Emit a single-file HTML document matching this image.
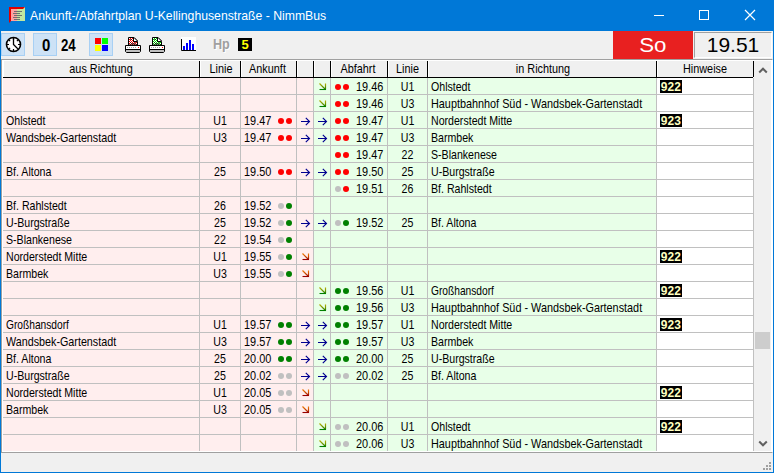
<!DOCTYPE html>
<html lang="de"><head><meta charset="utf-8"><title>Ankunft-/Abfahrtplan U-Kellinghusenstraße - NimmBus</title>
<style>
html,body{margin:0;padding:0}
body{width:774px;height:473px;overflow:hidden;background:#f0f0f0;position:relative;font-family:"Liberation Sans",sans-serif;color:#000}
#win{position:absolute;left:0;top:0;width:774px;height:473px;box-sizing:border-box;border:1px solid #0078d7;border-top:none;background:#f0f0f0}
#title{position:absolute;left:0;top:0;width:774px;height:31px;background:#0078d7}
#title .cap{position:absolute;left:30px;top:8px;font-size:13px;color:#fff;white-space:nowrap;transform:scaleX(.94);transform-origin:0 0}
.t{position:absolute;font-size:13px;line-height:17px;height:17px;white-space:nowrap}
.tl{transform:scaleX(0.815);transform-origin:0 0}
.tc{text-align:center;transform:scaleX(0.815);transform-origin:50% 0}
.n.tl{transform:scaleX(.84)}
.bg{position:absolute}
.hl{position:absolute;left:3px;width:750px;height:1px;background:#c0c0c0}
.vl{position:absolute;top:78px;height:373px;width:1px;background:#c0c0c0}
.dot{position:absolute;width:6px;height:6px;border-radius:50%}
.ar{position:absolute;overflow:visible}
.hd{position:absolute;top:61px;height:16px;background:#f0f0f0;border-left:1px solid #fff;border-right:1px solid #000;box-sizing:border-box;overflow:hidden}
.hw{position:absolute;background:#000;color:#ffffc0;font-size:13px;line-height:13px;height:13px;width:22px;text-align:center}
.hw b{display:inline-block;transform:scaleX(.92);transform-origin:50% 50%;font-weight:bold}

.tb{position:absolute;box-sizing:border-box;background:#cde2f6;border:1px solid #a8d0f4}
.dig{position:absolute;font-size:17px;line-height:17px;font-weight:bold;transform:scaleX(.8);transform-origin:0 0;letter-spacing:0}
.sq{position:absolute;width:6px;height:6px}
.hp{position:absolute;font-size:14px;line-height:17px;font-weight:bold;transform:scaleX(.9);transform-origin:0 0}
.five{position:absolute;width:14px;height:13px;background:#000;color:#ffff00;font-weight:bold;font-size:13px;line-height:13px;text-align:center}
.so{position:absolute;background:#e82020;color:#fff;font-size:21px;line-height:27px;text-align:center}
.so b{display:inline-block;font-weight:normal;transform:scaleX(1.06)}
.clk{position:absolute;box-sizing:border-box;border:1px solid #a0a0a0;border-right-color:#fff;border-bottom-color:#fff;font-size:21px;line-height:23px;text-align:center;background:#f0f0f0}
.gp{position:absolute;width:2px;height:2px;background:#a0a0a0}

</style></head><body>
<div id="win"></div>
<div id="title"><span class="cap">Ankunft-/Abfahrtplan U-Kellinghusenstraße - NimmBus</span></div>

<svg style="position:absolute;left:9px;top:7px" width="16" height="16" viewBox="0 0 16 16">
<rect x="0" y="0" width="8" height="14" fill="#ffa0a0"/><rect x="8" y="0" width="8" height="14" fill="#c0e8a0"/>
<path d="M0 16V0h16l-2 2H2v12z" fill="#e00000"/>
<g stroke="#707070" stroke-width="1"><path d="M5 4.500h8M4 6.500h7M5 8.500h8M4 10.500h7M5 12.500h6"/></g></svg>
<svg style="position:absolute;left:640px;top:0" width="134" height="31" viewBox="0 0 134 31">
<g stroke="#fff" stroke-width="1" fill="none"><path d="M14 15.500h10"/><rect x="59.500" y="10.500" width="9" height="9"/><path d="M105 10l10 10M115 10l-10 10" stroke-width="1.200"/></g></svg>


<!-- toolbar -->
<div class="tb" style="left:1px;top:33px;width:24px;height:23px"></div>
<svg style="position:absolute;left:5px;top:36px" width="17" height="17" viewBox="0 0 17 17">
<circle cx="8.5" cy="8.5" r="7" fill="#fff" stroke="#000" stroke-width="1.6"/>
<g stroke="#000" stroke-width="1.2"><path d="M8.500 1.500v2.500M8.500 13v2.500M1.500 8.500h2.500M13 8.500h2.500M3.600 3.600l1.500 1.500M13.400 3.600l-1.500 1.500M3.600 13.400l1.500-1.500M13.400 13.400l-1.500-1.500"/></g>
<path d="M8.500 2v6.500l3.500 3.500" fill="none" stroke="#000" stroke-width="1.300"/></svg>
<div class="tb" style="left:33px;top:33px;width:24px;height:23px"></div>
<span class="dig" style="left:42px;top:37px;transform:scaleX(.88)">0</span>
<span class="dig" style="left:61.300px;top:37px;transform:scaleX(.78)">24</span>
<div class="tb" style="left:89px;top:33px;width:24px;height:23px"></div>
<i class="sq" style="left:95px;top:38px;background:#ff0000"></i><i class="sq" style="left:102px;top:38px;background:#00ff00"></i>
<i class="sq" style="left:95px;top:45px;background:#ffff00"></i><i class="sq" style="left:102px;top:45px;background:#0000ff"></i>
<svg style="position:absolute;left:125px;top:37px" width="16" height="16" viewBox="0 0 16 16">
<defs><pattern id="pr" width="2" height="2" patternUnits="userSpaceOnUse"><rect width="2" height="2" fill="#fff"/><rect width="1" height="1" fill="#f00"/><rect x="1" y="1" width="1" height="1" fill="#f00"/></pattern></defs>
<path d="M3.500 8V.500h5.500l3.500 3.500V8z" fill="url(#pr)" stroke="#000"/><path d="M9 .500v4h4z" fill="#fff"/><path d="M9 .500l3.500 3.500M8.500 1v3.500h4" fill="none" stroke="#000" stroke-width="1"/>
<path d="M5 2.500h2M5 5.500h1M6 6.500h4M10 5.500h1" stroke="#000" stroke-width="1" opacity=".55"/>
<path d="M.500 8.500h15v6l-1 1h-13l-1-1z" fill="#fff" stroke="#000"/><rect x="1" y="12" width="14" height="1" fill="#000"/><rect x="1" y="13" width="14" height="2" fill="#c0c0c0"/>
<path d="M2 10.500h10" stroke="#a0a0a0" stroke-dasharray="1 1"/><rect x="13" y="10" width="1" height="1" fill="#f00"/></svg>
<svg style="position:absolute;left:149px;top:37px" width="16" height="16" viewBox="0 0 16 16">
<defs><pattern id="pg" width="2" height="2" patternUnits="userSpaceOnUse"><rect width="2" height="2" fill="#fff"/><rect width="1" height="1" fill="#00e000"/><rect x="1" y="1" width="1" height="1" fill="#00e000"/></pattern></defs>
<path d="M3.500 8V.500h5.500l3.500 3.500V8z" fill="url(#pg)" stroke="#000"/><path d="M9 .500v4h4z" fill="#fff"/><path d="M9 .500l3.500 3.500M8.500 1v3.500h4" fill="none" stroke="#000" stroke-width="1"/>
<path d="M5 2.500h2M5 5.500h1M6 6.500h4M10 5.500h1" stroke="#000" stroke-width="1" opacity=".55"/>
<path d="M.500 8.500h15v6l-1 1h-13l-1-1z" fill="#fff" stroke="#000"/><rect x="1" y="12" width="14" height="1" fill="#000"/><rect x="1" y="13" width="14" height="2" fill="#c0c0c0"/>
<path d="M2 10.500h10" stroke="#a0a0a0" stroke-dasharray="1 1"/><rect x="13" y="10" width="1" height="1" fill="#f00"/></svg>
<svg style="position:absolute;left:181px;top:37px" width="15" height="14" viewBox="0 0 15 14">
<rect width="15" height="14" fill="#fff"/><path d="M.5 2v11.500H15" fill="none" stroke="#000"/>
<g fill="#0000ff"><rect x="2" y="9" width="2" height="4"/><rect x="5" y="6" width="2" height="7"/><rect x="8" y="3" width="2" height="10"/><rect x="11" y="7" width="2" height="6"/></g></svg>
<span class="hp" style="left:213.500px;top:36.500px;color:#fff">Hp</span><span class="hp" style="left:212.500px;top:35.500px;color:#a0a0a0">Hp</span>
<span class="five" style="left:238px;top:38px">5</span>
<div class="so" style="left:613px;top:31px;width:80px;height:28px"><b>So</b></div>
<div class="clk" style="left:694px;top:32px;width:78px;height:26px">19.51</div>

<div id="grid">
<!-- sunken frame -->
<div style="position:absolute;left:1px;top:59px;width:772px;height:394px;box-sizing:border-box;border:1px solid #a0a0a0;border-right-color:#fff;background:#fff"></div>
<div style="position:absolute;left:3px;top:77px;width:750px;height:1px;background:#000"></div>
<div class="bg" style="left:3px;top:78px;width:311px;height:373px;background:#ffeeee"></div>
<div class="bg" style="left:314px;top:78px;width:343px;height:373px;background:#e8ffe8"></div>
<div class="bg" style="left:657px;top:78px;width:96px;height:373px;background:#ffffff"></div>
<div class="hl" style="top:94px"></div>
<div class="hl" style="top:111px"></div>
<div class="hl" style="top:128px"></div>
<div class="hl" style="top:145px"></div>
<div class="hl" style="top:162px"></div>
<div class="hl" style="top:179px"></div>
<div class="hl" style="top:196px"></div>
<div class="hl" style="top:213px"></div>
<div class="hl" style="top:230px"></div>
<div class="hl" style="top:247px"></div>
<div class="hl" style="top:264px"></div>
<div class="hl" style="top:281px"></div>
<div class="hl" style="top:298px"></div>
<div class="hl" style="top:315px"></div>
<div class="hl" style="top:332px"></div>
<div class="hl" style="top:349px"></div>
<div class="hl" style="top:366px"></div>
<div class="hl" style="top:383px"></div>
<div class="hl" style="top:400px"></div>
<div class="hl" style="top:417px"></div>
<div class="hl" style="top:434px"></div>
<div class="vl" style="left:199px"></div>
<div class="vl" style="left:240px"></div>
<div class="vl" style="left:296px"></div>
<div class="vl" style="left:313px"></div>
<div class="vl" style="left:330px"></div>
<div class="vl" style="left:387px"></div>
<div class="vl" style="left:427px"></div>
<div class="vl" style="left:656px"></div>
<div class="vl" style="left:753px"></div>
<svg class="ar" style="left:319px;top:83px" width="7" height="7" viewBox="0 0 7 7"><defs><linearGradient id="gdg" gradientUnits="userSpaceOnUse" x1="0" y1="0" x2="0" y2="7"><stop offset="0.2" stop-color="#a8a800"/><stop offset="0.9" stop-color="#208000"/></linearGradient></defs><path d="M.500 .500L6.500 6.500M6.500 .500V6.500" fill="none" stroke="url(#gdg)" stroke-width="1.200"/><path d="M.500 6.500H7" stroke="#008000" stroke-width="1.100"/></svg>
<i class="dot" style="left:335px;top:84px;background:#ff0000"></i><i class="dot" style="left:343px;top:84px;background:#ff0000"></i>
<span class="t n tl" style="left:356px;top:78px">19.46</span>
<span class="t tc" style="left:388px;top:78px;width:39px">U1</span>
<span class="t tl" style="left:431px;top:78px">Ohlstedt</span>
<span class="hw" style="left:660px;top:80px"><b>922</b></span>
<svg class="ar" style="left:319px;top:100px" width="7" height="7" viewBox="0 0 7 7"><defs><linearGradient id="gdg" gradientUnits="userSpaceOnUse" x1="0" y1="0" x2="0" y2="7"><stop offset="0.2" stop-color="#a8a800"/><stop offset="0.9" stop-color="#208000"/></linearGradient></defs><path d="M.500 .500L6.500 6.500M6.500 .500V6.500" fill="none" stroke="url(#gdg)" stroke-width="1.200"/><path d="M.500 6.500H7" stroke="#008000" stroke-width="1.100"/></svg>
<i class="dot" style="left:335px;top:101px;background:#ff0000"></i><i class="dot" style="left:343px;top:101px;background:#ff0000"></i>
<span class="t n tl" style="left:356px;top:95px">19.46</span>
<span class="t tc" style="left:388px;top:95px;width:39px">U3</span>
<span class="t tl" style="left:431px;top:95px;transform:scaleX(0.834)">Hauptbahnhof Süd - Wandsbek-Gartenstadt</span>
<span class="t tl" style="left:6px;top:112px">Ohlstedt</span>
<span class="t tc" style="left:200px;top:112px;width:40px">U1</span>
<span class="t n tl" style="left:244px;top:112px">19.47</span>
<i class="dot" style="left:278px;top:118px;background:#ff0000"></i><i class="dot" style="left:286px;top:118px;background:#ff0000"></i>
<svg class="ar" style="left:300px;top:117px" width="11" height="9" viewBox="0 0 11 9"><path d="M1 4.500H9.500M5.800 .800l3.700 3.700l-3.700 3.700" fill="none" stroke="#000090" stroke-width="1.150"/></svg>
<svg class="ar" style="left:317px;top:117px" width="11" height="9" viewBox="0 0 11 9"><path d="M1 4.500H9.500M5.800 .800l3.700 3.700l-3.700 3.700" fill="none" stroke="#000090" stroke-width="1.150"/></svg>
<i class="dot" style="left:335px;top:118px;background:#ff0000"></i><i class="dot" style="left:343px;top:118px;background:#ff0000"></i>
<span class="t n tl" style="left:356px;top:112px">19.47</span>
<span class="t tc" style="left:388px;top:112px;width:39px">U1</span>
<span class="t tl" style="left:431px;top:112px">Norderstedt Mitte</span>
<span class="hw" style="left:660px;top:114px"><b>923</b></span>
<span class="t tl" style="left:6px;top:129px;transform:scaleX(0.827)">Wandsbek-Gartenstadt</span>
<span class="t tc" style="left:200px;top:129px;width:40px">U3</span>
<span class="t n tl" style="left:244px;top:129px">19.47</span>
<i class="dot" style="left:278px;top:135px;background:#ff0000"></i><i class="dot" style="left:286px;top:135px;background:#ff0000"></i>
<svg class="ar" style="left:300px;top:134px" width="11" height="9" viewBox="0 0 11 9"><path d="M1 4.500H9.500M5.800 .800l3.700 3.700l-3.700 3.700" fill="none" stroke="#000090" stroke-width="1.150"/></svg>
<svg class="ar" style="left:317px;top:134px" width="11" height="9" viewBox="0 0 11 9"><path d="M1 4.500H9.500M5.800 .800l3.700 3.700l-3.700 3.700" fill="none" stroke="#000090" stroke-width="1.150"/></svg>
<i class="dot" style="left:335px;top:135px;background:#ff0000"></i><i class="dot" style="left:343px;top:135px;background:#ff0000"></i>
<span class="t n tl" style="left:356px;top:129px">19.47</span>
<span class="t tc" style="left:388px;top:129px;width:39px">U3</span>
<span class="t tl" style="left:431px;top:129px">Barmbek</span>
<i class="dot" style="left:335px;top:152px;background:#ff0000"></i><i class="dot" style="left:343px;top:152px;background:#ff0000"></i>
<span class="t n tl" style="left:356px;top:146px">19.47</span>
<span class="t tc" style="left:388px;top:146px;width:39px">22</span>
<span class="t tl" style="left:431px;top:146px">S-Blankenese</span>
<span class="t tl" style="left:6px;top:163px">Bf. Altona</span>
<span class="t tc" style="left:200px;top:163px;width:40px">25</span>
<span class="t n tl" style="left:244px;top:163px">19.50</span>
<i class="dot" style="left:278px;top:169px;background:#ff0000"></i><i class="dot" style="left:286px;top:169px;background:#ff0000"></i>
<svg class="ar" style="left:300px;top:168px" width="11" height="9" viewBox="0 0 11 9"><path d="M1 4.500H9.500M5.800 .800l3.700 3.700l-3.700 3.700" fill="none" stroke="#000090" stroke-width="1.150"/></svg>
<svg class="ar" style="left:317px;top:168px" width="11" height="9" viewBox="0 0 11 9"><path d="M1 4.500H9.500M5.800 .800l3.700 3.700l-3.700 3.700" fill="none" stroke="#000090" stroke-width="1.150"/></svg>
<i class="dot" style="left:335px;top:169px;background:#ff0000"></i><i class="dot" style="left:343px;top:169px;background:#ff0000"></i>
<span class="t n tl" style="left:356px;top:163px">19.50</span>
<span class="t tc" style="left:388px;top:163px;width:39px">25</span>
<span class="t tl" style="left:431px;top:163px">U-Burgstraße</span>
<i class="dot" style="left:335px;top:186px;background:#c0c0c0"></i><i class="dot" style="left:343px;top:186px;background:#ff0000"></i>
<span class="t n tl" style="left:356px;top:180px">19.51</span>
<span class="t tc" style="left:388px;top:180px;width:39px">26</span>
<span class="t tl" style="left:431px;top:180px">Bf. Rahlstedt</span>
<span class="t tl" style="left:6px;top:197px">Bf. Rahlstedt</span>
<span class="t tc" style="left:200px;top:197px;width:40px">26</span>
<span class="t n tl" style="left:244px;top:197px">19.52</span>
<i class="dot" style="left:278px;top:203px;background:#c0c0c0"></i><i class="dot" style="left:286px;top:203px;background:#008000"></i>
<span class="t tl" style="left:6px;top:214px">U-Burgstraße</span>
<span class="t tc" style="left:200px;top:214px;width:40px">25</span>
<span class="t n tl" style="left:244px;top:214px">19.52</span>
<i class="dot" style="left:278px;top:220px;background:#c0c0c0"></i><i class="dot" style="left:286px;top:220px;background:#008000"></i>
<svg class="ar" style="left:300px;top:219px" width="11" height="9" viewBox="0 0 11 9"><path d="M1 4.500H9.500M5.800 .800l3.700 3.700l-3.700 3.700" fill="none" stroke="#000090" stroke-width="1.150"/></svg>
<svg class="ar" style="left:317px;top:219px" width="11" height="9" viewBox="0 0 11 9"><path d="M1 4.500H9.500M5.800 .800l3.700 3.700l-3.700 3.700" fill="none" stroke="#000090" stroke-width="1.150"/></svg>
<i class="dot" style="left:335px;top:220px;background:#c0c0c0"></i><i class="dot" style="left:343px;top:220px;background:#008000"></i>
<span class="t n tl" style="left:356px;top:214px">19.52</span>
<span class="t tc" style="left:388px;top:214px;width:39px">25</span>
<span class="t tl" style="left:431px;top:214px">Bf. Altona</span>
<span class="t tl" style="left:6px;top:231px">S-Blankenese</span>
<span class="t tc" style="left:200px;top:231px;width:40px">22</span>
<span class="t n tl" style="left:244px;top:231px">19.54</span>
<i class="dot" style="left:278px;top:237px;background:#c0c0c0"></i><i class="dot" style="left:286px;top:237px;background:#008000"></i>
<span class="t tl" style="left:6px;top:248px">Norderstedt Mitte</span>
<span class="t tc" style="left:200px;top:248px;width:40px">U1</span>
<span class="t n tl" style="left:244px;top:248px">19.55</span>
<i class="dot" style="left:278px;top:254px;background:#c0c0c0"></i><i class="dot" style="left:286px;top:254px;background:#008000"></i>
<svg class="ar" style="left:302px;top:253px" width="7" height="7" viewBox="0 0 7 7"><defs><linearGradient id="gdr" gradientUnits="userSpaceOnUse" x1="0" y1="0" x2="0" y2="7"><stop offset="0.2" stop-color="#e87000"/><stop offset="0.9" stop-color="#a01000"/></linearGradient></defs><path d="M.500 .500L6.500 6.500M6.500 .500V6.500" fill="none" stroke="url(#gdr)" stroke-width="1.200"/><path d="M.500 6.500H7" stroke="#980000" stroke-width="1.100"/></svg>
<span class="hw" style="left:660px;top:250px"><b>922</b></span>
<span class="t tl" style="left:6px;top:265px">Barmbek</span>
<span class="t tc" style="left:200px;top:265px;width:40px">U3</span>
<span class="t n tl" style="left:244px;top:265px">19.55</span>
<i class="dot" style="left:278px;top:271px;background:#c0c0c0"></i><i class="dot" style="left:286px;top:271px;background:#008000"></i>
<svg class="ar" style="left:302px;top:270px" width="7" height="7" viewBox="0 0 7 7"><defs><linearGradient id="gdr" gradientUnits="userSpaceOnUse" x1="0" y1="0" x2="0" y2="7"><stop offset="0.2" stop-color="#e87000"/><stop offset="0.9" stop-color="#a01000"/></linearGradient></defs><path d="M.500 .500L6.500 6.500M6.500 .500V6.500" fill="none" stroke="url(#gdr)" stroke-width="1.200"/><path d="M.500 6.500H7" stroke="#980000" stroke-width="1.100"/></svg>
<svg class="ar" style="left:319px;top:287px" width="7" height="7" viewBox="0 0 7 7"><defs><linearGradient id="gdg" gradientUnits="userSpaceOnUse" x1="0" y1="0" x2="0" y2="7"><stop offset="0.2" stop-color="#a8a800"/><stop offset="0.9" stop-color="#208000"/></linearGradient></defs><path d="M.500 .500L6.500 6.500M6.500 .500V6.500" fill="none" stroke="url(#gdg)" stroke-width="1.200"/><path d="M.500 6.500H7" stroke="#008000" stroke-width="1.100"/></svg>
<i class="dot" style="left:335px;top:288px;background:#008000"></i><i class="dot" style="left:343px;top:288px;background:#008000"></i>
<span class="t n tl" style="left:356px;top:282px">19.56</span>
<span class="t tc" style="left:388px;top:282px;width:39px">U1</span>
<span class="t tl" style="left:431px;top:282px;transform:scaleX(0.785)">Großhansdorf</span>
<span class="hw" style="left:660px;top:284px"><b>922</b></span>
<svg class="ar" style="left:319px;top:304px" width="7" height="7" viewBox="0 0 7 7"><defs><linearGradient id="gdg" gradientUnits="userSpaceOnUse" x1="0" y1="0" x2="0" y2="7"><stop offset="0.2" stop-color="#a8a800"/><stop offset="0.9" stop-color="#208000"/></linearGradient></defs><path d="M.500 .500L6.500 6.500M6.500 .500V6.500" fill="none" stroke="url(#gdg)" stroke-width="1.200"/><path d="M.500 6.500H7" stroke="#008000" stroke-width="1.100"/></svg>
<i class="dot" style="left:335px;top:305px;background:#008000"></i><i class="dot" style="left:343px;top:305px;background:#008000"></i>
<span class="t n tl" style="left:356px;top:299px">19.56</span>
<span class="t tc" style="left:388px;top:299px;width:39px">U3</span>
<span class="t tl" style="left:431px;top:299px;transform:scaleX(0.834)">Hauptbahnhof Süd - Wandsbek-Gartenstadt</span>
<span class="t tl" style="left:6px;top:316px;transform:scaleX(0.785)">Großhansdorf</span>
<span class="t tc" style="left:200px;top:316px;width:40px">U1</span>
<span class="t n tl" style="left:244px;top:316px">19.57</span>
<i class="dot" style="left:278px;top:322px;background:#008000"></i><i class="dot" style="left:286px;top:322px;background:#008000"></i>
<svg class="ar" style="left:300px;top:321px" width="11" height="9" viewBox="0 0 11 9"><path d="M1 4.500H9.500M5.800 .800l3.700 3.700l-3.700 3.700" fill="none" stroke="#000090" stroke-width="1.150"/></svg>
<svg class="ar" style="left:317px;top:321px" width="11" height="9" viewBox="0 0 11 9"><path d="M1 4.500H9.500M5.800 .800l3.700 3.700l-3.700 3.700" fill="none" stroke="#000090" stroke-width="1.150"/></svg>
<i class="dot" style="left:335px;top:322px;background:#008000"></i><i class="dot" style="left:343px;top:322px;background:#008000"></i>
<span class="t n tl" style="left:356px;top:316px">19.57</span>
<span class="t tc" style="left:388px;top:316px;width:39px">U1</span>
<span class="t tl" style="left:431px;top:316px">Norderstedt Mitte</span>
<span class="hw" style="left:660px;top:318px"><b>923</b></span>
<span class="t tl" style="left:6px;top:333px;transform:scaleX(0.827)">Wandsbek-Gartenstadt</span>
<span class="t tc" style="left:200px;top:333px;width:40px">U3</span>
<span class="t n tl" style="left:244px;top:333px">19.57</span>
<i class="dot" style="left:278px;top:339px;background:#008000"></i><i class="dot" style="left:286px;top:339px;background:#008000"></i>
<svg class="ar" style="left:300px;top:338px" width="11" height="9" viewBox="0 0 11 9"><path d="M1 4.500H9.500M5.800 .800l3.700 3.700l-3.700 3.700" fill="none" stroke="#000090" stroke-width="1.150"/></svg>
<svg class="ar" style="left:317px;top:338px" width="11" height="9" viewBox="0 0 11 9"><path d="M1 4.500H9.500M5.800 .800l3.700 3.700l-3.700 3.700" fill="none" stroke="#000090" stroke-width="1.150"/></svg>
<i class="dot" style="left:335px;top:339px;background:#008000"></i><i class="dot" style="left:343px;top:339px;background:#008000"></i>
<span class="t n tl" style="left:356px;top:333px">19.57</span>
<span class="t tc" style="left:388px;top:333px;width:39px">U3</span>
<span class="t tl" style="left:431px;top:333px">Barmbek</span>
<span class="t tl" style="left:6px;top:350px">Bf. Altona</span>
<span class="t tc" style="left:200px;top:350px;width:40px">25</span>
<span class="t n tl" style="left:244px;top:350px">20.00</span>
<i class="dot" style="left:278px;top:356px;background:#008000"></i><i class="dot" style="left:286px;top:356px;background:#008000"></i>
<svg class="ar" style="left:300px;top:355px" width="11" height="9" viewBox="0 0 11 9"><path d="M1 4.500H9.500M5.800 .800l3.700 3.700l-3.700 3.700" fill="none" stroke="#000090" stroke-width="1.150"/></svg>
<svg class="ar" style="left:317px;top:355px" width="11" height="9" viewBox="0 0 11 9"><path d="M1 4.500H9.500M5.800 .800l3.700 3.700l-3.700 3.700" fill="none" stroke="#000090" stroke-width="1.150"/></svg>
<i class="dot" style="left:335px;top:356px;background:#008000"></i><i class="dot" style="left:343px;top:356px;background:#008000"></i>
<span class="t n tl" style="left:356px;top:350px">20.00</span>
<span class="t tc" style="left:388px;top:350px;width:39px">25</span>
<span class="t tl" style="left:431px;top:350px">U-Burgstraße</span>
<span class="t tl" style="left:6px;top:367px">U-Burgstraße</span>
<span class="t tc" style="left:200px;top:367px;width:40px">25</span>
<span class="t n tl" style="left:244px;top:367px">20.02</span>
<i class="dot" style="left:278px;top:373px;background:#c0c0c0"></i><i class="dot" style="left:286px;top:373px;background:#c0c0c0"></i>
<svg class="ar" style="left:300px;top:372px" width="11" height="9" viewBox="0 0 11 9"><path d="M1 4.500H9.500M5.800 .800l3.700 3.700l-3.700 3.700" fill="none" stroke="#000090" stroke-width="1.150"/></svg>
<svg class="ar" style="left:317px;top:372px" width="11" height="9" viewBox="0 0 11 9"><path d="M1 4.500H9.500M5.800 .800l3.700 3.700l-3.700 3.700" fill="none" stroke="#000090" stroke-width="1.150"/></svg>
<i class="dot" style="left:335px;top:373px;background:#c0c0c0"></i><i class="dot" style="left:343px;top:373px;background:#c0c0c0"></i>
<span class="t n tl" style="left:356px;top:367px">20.02</span>
<span class="t tc" style="left:388px;top:367px;width:39px">25</span>
<span class="t tl" style="left:431px;top:367px">Bf. Altona</span>
<span class="t tl" style="left:6px;top:384px">Norderstedt Mitte</span>
<span class="t tc" style="left:200px;top:384px;width:40px">U1</span>
<span class="t n tl" style="left:244px;top:384px">20.05</span>
<i class="dot" style="left:278px;top:390px;background:#c0c0c0"></i><i class="dot" style="left:286px;top:390px;background:#c0c0c0"></i>
<svg class="ar" style="left:302px;top:389px" width="7" height="7" viewBox="0 0 7 7"><defs><linearGradient id="gdr" gradientUnits="userSpaceOnUse" x1="0" y1="0" x2="0" y2="7"><stop offset="0.2" stop-color="#e87000"/><stop offset="0.9" stop-color="#a01000"/></linearGradient></defs><path d="M.500 .500L6.500 6.500M6.500 .500V6.500" fill="none" stroke="url(#gdr)" stroke-width="1.200"/><path d="M.500 6.500H7" stroke="#980000" stroke-width="1.100"/></svg>
<span class="hw" style="left:660px;top:386px"><b>922</b></span>
<span class="t tl" style="left:6px;top:401px">Barmbek</span>
<span class="t tc" style="left:200px;top:401px;width:40px">U3</span>
<span class="t n tl" style="left:244px;top:401px">20.05</span>
<i class="dot" style="left:278px;top:407px;background:#c0c0c0"></i><i class="dot" style="left:286px;top:407px;background:#c0c0c0"></i>
<svg class="ar" style="left:302px;top:406px" width="7" height="7" viewBox="0 0 7 7"><defs><linearGradient id="gdr" gradientUnits="userSpaceOnUse" x1="0" y1="0" x2="0" y2="7"><stop offset="0.2" stop-color="#e87000"/><stop offset="0.9" stop-color="#a01000"/></linearGradient></defs><path d="M.500 .500L6.500 6.500M6.500 .500V6.500" fill="none" stroke="url(#gdr)" stroke-width="1.200"/><path d="M.500 6.500H7" stroke="#980000" stroke-width="1.100"/></svg>
<svg class="ar" style="left:319px;top:423px" width="7" height="7" viewBox="0 0 7 7"><defs><linearGradient id="gdg" gradientUnits="userSpaceOnUse" x1="0" y1="0" x2="0" y2="7"><stop offset="0.2" stop-color="#a8a800"/><stop offset="0.9" stop-color="#208000"/></linearGradient></defs><path d="M.500 .500L6.500 6.500M6.500 .500V6.500" fill="none" stroke="url(#gdg)" stroke-width="1.200"/><path d="M.500 6.500H7" stroke="#008000" stroke-width="1.100"/></svg>
<i class="dot" style="left:335px;top:424px;background:#c0c0c0"></i><i class="dot" style="left:343px;top:424px;background:#c0c0c0"></i>
<span class="t n tl" style="left:356px;top:418px">20.06</span>
<span class="t tc" style="left:388px;top:418px;width:39px">U1</span>
<span class="t tl" style="left:431px;top:418px">Ohlstedt</span>
<span class="hw" style="left:660px;top:420px"><b>922</b></span>
<svg class="ar" style="left:319px;top:440px" width="7" height="7" viewBox="0 0 7 7"><defs><linearGradient id="gdg" gradientUnits="userSpaceOnUse" x1="0" y1="0" x2="0" y2="7"><stop offset="0.2" stop-color="#a8a800"/><stop offset="0.9" stop-color="#208000"/></linearGradient></defs><path d="M.500 .500L6.500 6.500M6.500 .500V6.500" fill="none" stroke="url(#gdg)" stroke-width="1.200"/><path d="M.500 6.500H7" stroke="#008000" stroke-width="1.100"/></svg>
<i class="dot" style="left:335px;top:441px;background:#c0c0c0"></i><i class="dot" style="left:343px;top:441px;background:#c0c0c0"></i>
<span class="t n tl" style="left:356px;top:435px">20.06</span>
<span class="t tc" style="left:388px;top:435px;width:39px">U3</span>
<span class="t tl" style="left:431px;top:435px;transform:scaleX(0.834)">Hauptbahnhof Süd - Wandsbek-Gartenstadt</span>
<div class="hd" style="left:3px;width:197px"><span class="t tc" style="left:-1px;top:-1px;width:196px;transform:scaleX(.835)">aus Richtung</span></div>
<div class="hd" style="left:200px;width:41px"><span class="t tc" style="left:-0.5px;top:-1px;width:40px;transform:scaleX(.835)">Linie</span></div>
<div class="hd" style="left:241px;width:56px"><span class="t tc" style="left:-2px;top:-1px;width:55px;transform:scaleX(.835)">Ankunft</span></div>
<div class="hd" style="left:297px;width:17px"><span class="t tc" style="left:-2px;top:-1px;width:16px;transform:scaleX(.835)"></span></div>
<div class="hd" style="left:314px;width:17px"><span class="t tc" style="left:-2px;top:-1px;width:16px;transform:scaleX(.835)"></span></div>
<div class="hd" style="left:331px;width:57px"><span class="t tc" style="left:-2px;top:-1px;width:56px;transform:scaleX(.835)">Abfahrt</span></div>
<div class="hd" style="left:388px;width:40px"><span class="t tc" style="left:-1px;top:-1px;width:39px;transform:scaleX(.835)">Linie</span></div>
<div class="hd" style="left:428px;width:229px"><span class="t tc" style="left:-0.5px;top:-1px;width:228px;transform:scaleX(.835)">in Richtung</span></div>
<div class="hd" style="left:657px;width:97px"><span class="t tc" style="left:-1px;top:-1px;width:96px;transform:scaleX(.835)">Hinweise</span></div>

<div style="position:absolute;left:754px;top:61px;width:17px;height:390px;background:#f0f0f0"></div>
<div style="position:absolute;left:755px;top:332px;width:15px;height:17px;background:#cdcdcd"></div>
<svg style="position:absolute;left:757.600px;top:66.600px" width="10" height="7" viewBox="0 0 10 7"><path d="M1.200 5.500L5 1.700l3.800 3.800" fill="none" stroke="#606060" stroke-width="2"/></svg>
<svg style="position:absolute;left:757.500px;top:439.500px" width="10" height="7" viewBox="0 0 10 7"><path d="M1.200 1.500L5 5.300l3.800-3.800" fill="none" stroke="#606060" stroke-width="2"/></svg>
<!-- size grip -->
<i class="gp" style="left:769px;top:462px"></i><i class="gp" style="left:769px;top:465px"></i><i class="gp" style="left:769px;top:468px"></i>
<i class="gp" style="left:766px;top:465px"></i><i class="gp" style="left:766px;top:468px"></i><i class="gp" style="left:763px;top:468px"></i>

</div>
</body></html>
